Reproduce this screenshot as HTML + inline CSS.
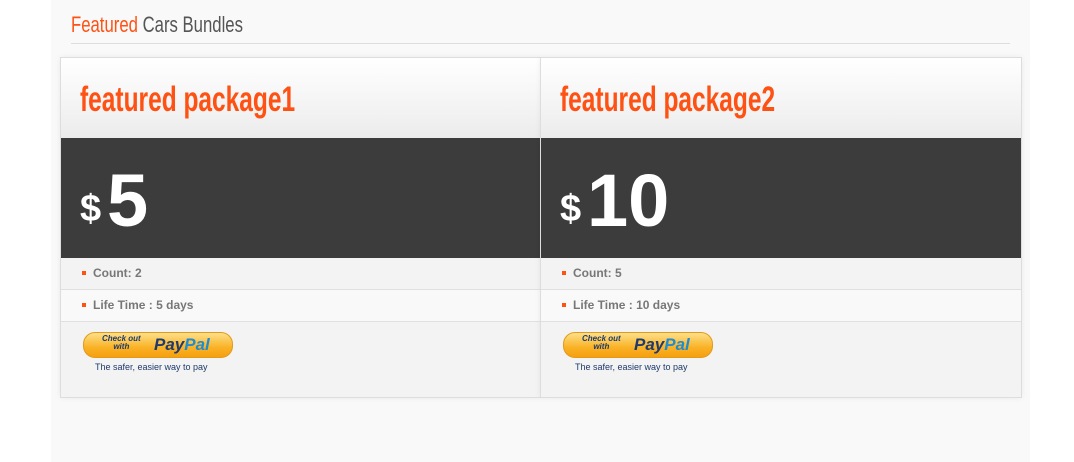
<!DOCTYPE html>
<html><head><style>
body{margin:0;width:1074px;height:462px;background:#fff;font-family:"Liberation Sans",sans-serif;position:relative;overflow:hidden}
.wrap{position:absolute;left:51px;top:0;width:979px;height:462px;background:#f9f9f9}
.h{position:absolute;left:71px;top:12px;font-size:22px;color:#555;transform:scaleX(.76);transform-origin:left top;white-space:nowrap}
.h span{color:#fe5214}
.line{position:absolute;left:71px;top:43px;width:939px;height:1px;background:#ddd}
.card{position:absolute;top:57px;width:480px;height:339px;border:1px solid #ddd;background:#f3f3f3;box-shadow:0 0 6px rgba(0,0,0,.06)}
.hd{height:80px;background:linear-gradient(#fff,#ececec);position:relative}
.hd div{position:absolute;left:19px;top:22px;font-size:35px;font-weight:bold;color:#fe5214;transform:scaleX(.7);transform-origin:left top;white-space:nowrap}
.pr{height:120px;background:#3c3c3c;position:relative;color:#fff;font-weight:bold}
.pr .d{position:absolute;left:19px;top:50px;font-size:38px}
.pr .n{position:absolute;left:46px;top:20px;font-size:74px}
.r{height:31px;border-bottom:1px solid #e0e0e0;font-size:12px;font-weight:bold;color:#777;line-height:30px;padding-left:32px;position:relative}
.r:before{content:"";position:absolute;left:21px;top:13px;width:4px;height:4px;background:#fe5214}
.r2{background:#f9f9f9}
.pp{position:absolute;left:22px;top:274px}
.btn{width:148px;height:24px;border-radius:12px;background:linear-gradient(#fde08a,#f9b226 60%,#f6a00e);border:1px solid #e39a1b;position:relative}
.btn .c{position:absolute;left:18px;top:2px;font-size:8px;font-style:italic;font-weight:bold;color:#1e3a6e;line-height:8px;text-align:center}
.btn .p{position:absolute;left:70px;top:2px;font-size:17px;font-style:italic;font-weight:bold;color:#1e3a6e}
.btn .p i{color:#1f8bd1}
.t{font-size:9px;color:#1e3a6e;margin:4px 0 0 12px}
</style></head><body>
<div class="wrap"></div>
<div class="h"><span>Featured</span> Cars Bundles</div>
<div class="line"></div>
<div class="card" style="left:60px">
<div class="hd"><div>featured package1</div></div>
<div class="pr"><span class="d">$</span><span class="n">5</span></div>
<div class="r">Count: 2</div>
<div class="r r2">Life Time : 5 days</div>
<div class="pp"><div class="btn"><div class="c">Check out<br>with</div><div class="p">Pay<i>Pal</i></div></div><div class="t">The safer, easier way to pay</div></div>
</div>
<div class="card" style="left:540px">
<div class="hd"><div>featured package2</div></div>
<div class="pr"><span class="d">$</span><span class="n">10</span></div>
<div class="r">Count: 5</div>
<div class="r r2">Life Time : 10 days</div>
<div class="pp"><div class="btn"><div class="c">Check out<br>with</div><div class="p">Pay<i>Pal</i></div></div><div class="t">The safer, easier way to pay</div></div>
</div>
</body></html>
